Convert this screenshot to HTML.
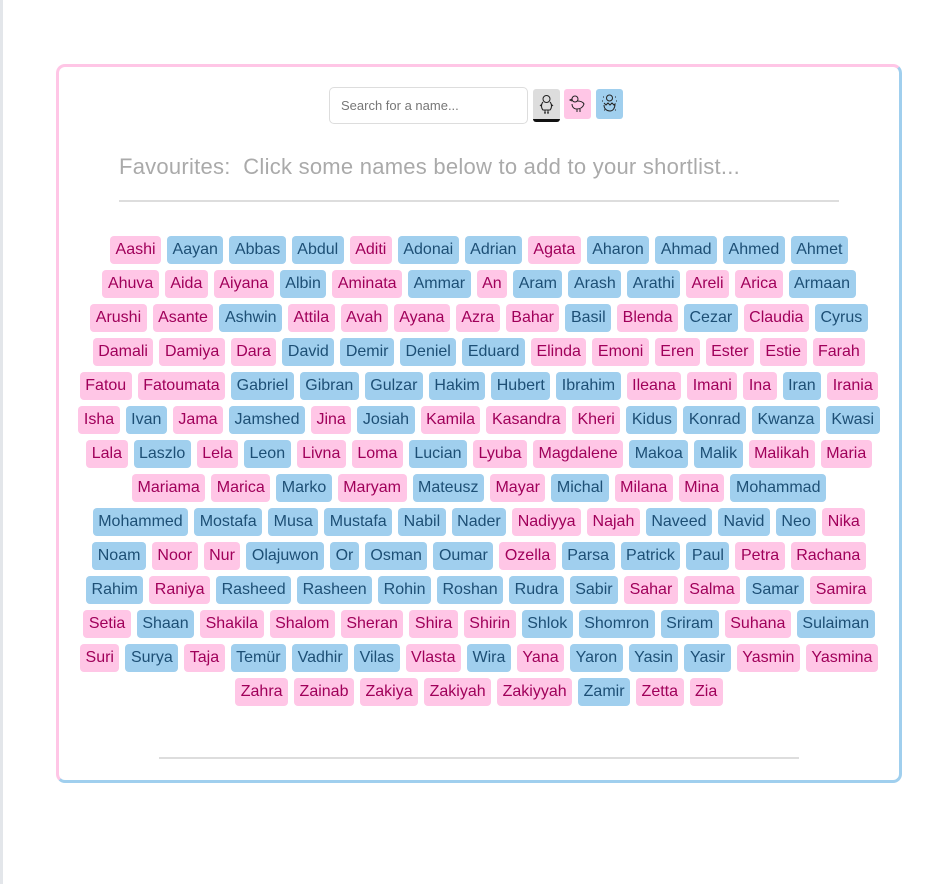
<!DOCTYPE html>
<html><head><meta charset="utf-8"><style>
html,body{margin:0;padding:0;background:#fff;width:948px;height:884px;overflow:hidden;font-family:"Liberation Sans",sans-serif}
.edge{position:absolute;left:0;top:0;width:3px;height:884px;background:#e3e6ea}
.card{position:absolute;left:56px;top:64px;width:840px;height:713px;border:3px solid;border-color:#ffc6e6 #a0cfee #a0cfee #ffc6e6;border-radius:9px;background:#fff}
.search{position:absolute;left:270px;top:20px;width:199px;height:37px;border:1px solid #ddd;border-radius:5px;box-sizing:border-box;font-size:13px;color:#777;padding:10px 0 0 11px}
.btn{position:absolute;top:22px;width:27px;height:30px;border-radius:3px;box-sizing:border-box}
.fav{position:absolute;left:60px;top:87px;font-size:22px;color:#aaa;letter-spacing:0.25px}
.hr1{position:absolute;left:60px;top:133px;width:720px;height:2px;background:#ddd}
.hr2{position:absolute;left:100px;top:690px;width:640px;height:2px;background:#ddd}
.rows{position:absolute;left:0;top:169px;width:840px}
.r{text-align:center;white-space:nowrap;height:34px;font-size:0}
.r span{display:inline-block;font-size:16px;height:28px;line-height:28px;padding:0 5.5px;margin:0 3px;border-radius:4px}
.p{background:#ffc6e6;color:#a0005a}
.b{background:#a0cfee;color:#1d4f75}
</style></head><body>
<div class="edge"></div>
<div class="card">
<div class="search">Search for a name...</div>
<div class="btn" style="left:474px;background:#ddd;border-bottom:3px solid #111;height:33px"><svg width="27" height="30" viewBox="0 0 27 30"><g fill="none" stroke="#222" stroke-width="1"><circle cx="13.5" cy="10" r="3.5"/><path d="M10 13c-2 2-2 6 0 8h7c2-2 2-6 0-8M9 15l-2 2M18 15l2 2M12 21v3M15 21v3M11 24h2M14 24h2"/></g></svg></div>
<div class="btn" style="left:505px;background:#ffc6e6"><svg width="27" height="30" viewBox="0 0 27 30"><g fill="none" stroke="#222" stroke-width="1"><circle cx="11" cy="10" r="3"/><path d="M8 10l-2 1 2 1M13 12c3 0 6 1 7 3-1 3-3 5-7 5s-5-3-5-5M13 20v3M16 20v3"/></g></svg></div>
<div class="btn" style="left:537px;background:#a0cfee"><svg width="27" height="30" viewBox="0 0 27 30"><g fill="none" stroke="#222" stroke-width="1"><circle cx="13.5" cy="9" r="3"/><path d="M8 14l2 2 2-2 2 2 2-2 2 2 1-1c0 4-2 7-5 7s-6-2-6-6M7 8h1M19 8h1M8 21h1M19 21h1M6 12h1M20 12h1"/></g></svg></div>
<div class="fav">Favourites:&nbsp; Click some names below to add to your shortlist...</div>
<div class="hr1"></div>
<div class="rows">
<div class="r"><span class="p">Aashi</span><span class="b">Aayan</span><span class="b">Abbas</span><span class="b">Abdul</span><span class="p">Aditi</span><span class="b">Adonai</span><span class="b">Adrian</span><span class="p">Agata</span><span class="b">Aharon</span><span class="b">Ahmad</span><span class="b">Ahmed</span><span class="b">Ahmet</span></div>
<div class="r"><span class="p">Ahuva</span><span class="p">Aida</span><span class="p">Aiyana</span><span class="b">Albin</span><span class="p">Aminata</span><span class="b">Ammar</span><span class="p">An</span><span class="b">Aram</span><span class="b">Arash</span><span class="b">Arathi</span><span class="p">Areli</span><span class="p">Arica</span><span class="b">Armaan</span></div>
<div class="r"><span class="p">Arushi</span><span class="p">Asante</span><span class="b">Ashwin</span><span class="p">Attila</span><span class="p">Avah</span><span class="p">Ayana</span><span class="p">Azra</span><span class="p">Bahar</span><span class="b">Basil</span><span class="p">Blenda</span><span class="b">Cezar</span><span class="p">Claudia</span><span class="b">Cyrus</span></div>
<div class="r"><span class="p">Damali</span><span class="p">Damiya</span><span class="p">Dara</span><span class="b">David</span><span class="b">Demir</span><span class="b">Deniel</span><span class="b">Eduard</span><span class="p">Elinda</span><span class="p">Emoni</span><span class="p">Eren</span><span class="p">Ester</span><span class="p">Estie</span><span class="p">Farah</span></div>
<div class="r"><span class="p">Fatou</span><span class="p">Fatoumata</span><span class="b">Gabriel</span><span class="b">Gibran</span><span class="b">Gulzar</span><span class="b">Hakim</span><span class="b">Hubert</span><span class="b">Ibrahim</span><span class="p">Ileana</span><span class="p">Imani</span><span class="p">Ina</span><span class="b">Iran</span><span class="p">Irania</span></div>
<div class="r"><span class="p">Isha</span><span class="b">Ivan</span><span class="p">Jama</span><span class="b">Jamshed</span><span class="p">Jina</span><span class="b">Josiah</span><span class="p">Kamila</span><span class="p">Kasandra</span><span class="p">Kheri</span><span class="b">Kidus</span><span class="b">Konrad</span><span class="b">Kwanza</span><span class="b">Kwasi</span></div>
<div class="r"><span class="p">Lala</span><span class="b">Laszlo</span><span class="p">Lela</span><span class="b">Leon</span><span class="p">Livna</span><span class="p">Loma</span><span class="b">Lucian</span><span class="p">Lyuba</span><span class="p">Magdalene</span><span class="b">Makoa</span><span class="b">Malik</span><span class="p">Malikah</span><span class="p">Maria</span></div>
<div class="r"><span class="p">Mariama</span><span class="p">Marica</span><span class="b">Marko</span><span class="p">Maryam</span><span class="b">Mateusz</span><span class="p">Mayar</span><span class="b">Michal</span><span class="p">Milana</span><span class="p">Mina</span><span class="b">Mohammad</span></div>
<div class="r"><span class="b">Mohammed</span><span class="b">Mostafa</span><span class="b">Musa</span><span class="b">Mustafa</span><span class="b">Nabil</span><span class="b">Nader</span><span class="p">Nadiyya</span><span class="p">Najah</span><span class="b">Naveed</span><span class="b">Navid</span><span class="b">Neo</span><span class="p">Nika</span></div>
<div class="r"><span class="b">Noam</span><span class="p">Noor</span><span class="p">Nur</span><span class="b">Olajuwon</span><span class="b">Or</span><span class="b">Osman</span><span class="b">Oumar</span><span class="p">Ozella</span><span class="b">Parsa</span><span class="b">Patrick</span><span class="b">Paul</span><span class="p">Petra</span><span class="p">Rachana</span></div>
<div class="r"><span class="b">Rahim</span><span class="p">Raniya</span><span class="b">Rasheed</span><span class="b">Rasheen</span><span class="b">Rohin</span><span class="b">Roshan</span><span class="b">Rudra</span><span class="b">Sabir</span><span class="p">Sahar</span><span class="p">Salma</span><span class="b">Samar</span><span class="p">Samira</span></div>
<div class="r"><span class="p">Setia</span><span class="b">Shaan</span><span class="p">Shakila</span><span class="p">Shalom</span><span class="p">Sheran</span><span class="p">Shira</span><span class="p">Shirin</span><span class="b">Shlok</span><span class="b">Shomron</span><span class="b">Sriram</span><span class="p">Suhana</span><span class="b">Sulaiman</span></div>
<div class="r"><span class="p">Suri</span><span class="b">Surya</span><span class="p">Taja</span><span class="b">Temür</span><span class="b">Vadhir</span><span class="b">Vilas</span><span class="p">Vlasta</span><span class="b">Wira</span><span class="p">Yana</span><span class="b">Yaron</span><span class="b">Yasin</span><span class="b">Yasir</span><span class="p">Yasmin</span><span class="p">Yasmina</span></div>
<div class="r"><span class="p">Zahra</span><span class="p">Zainab</span><span class="p">Zakiya</span><span class="p">Zakiyah</span><span class="p">Zakiyyah</span><span class="b">Zamir</span><span class="p">Zetta</span><span class="p">Zia</span></div>
</div>
<div class="hr2"></div>
</div>
</body></html>
